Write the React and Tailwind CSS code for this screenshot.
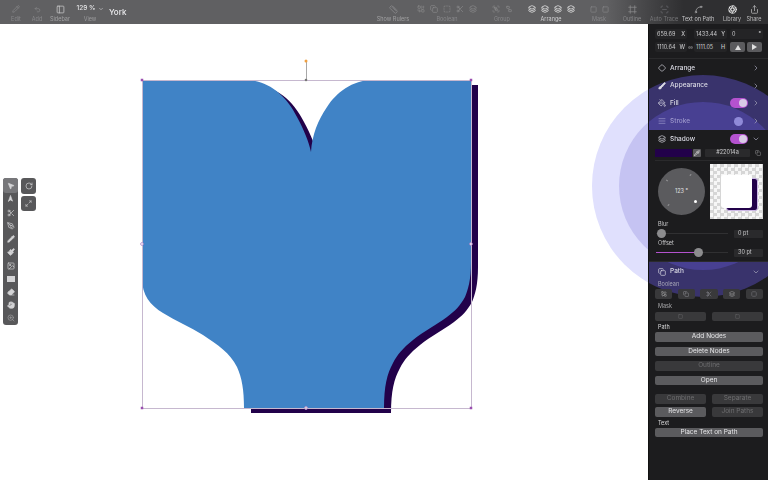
import React from "react";
import { Pencil, PanelLeft, ChevronDown, ChevronRight, Ruler, Layers, Share, Diamond, PaintBucket, Brush, AlignJustify, Pipette, MousePointer2, Navigation, Scissors, PenTool, Paintbrush, Square, Eraser, Hand, ZoomIn, RotateCw, Spline, Combine, Copy, Undo2, SquareDashed, Image, ScanLine, Group, Ungroup, Aperture, Frame, Maximize2, Link2 } from "lucide-react";

function Tool({ w, ml = 0, label, dim = true, labelClass, children }) {
  return (
    <div className="flex flex-col items-center shrink-0" style={{ width: w, marginLeft: ml }}>
      <div className={`flex items-center justify-center gap-[5px] h-[12px] mt-[3px] ${dim ? "text-[#8b8b8d]" : "text-white"}`}>{children}</div>
      <div className={`text-[5.5px] leading-[7px] mt-[1px] whitespace-nowrap ${labelClass || (dim ? "text-[#87878a]" : "text-[#cfcfd1]")}`}>{label}</div>
    </div>
  );
}

function Toolbar() {
  return (
    <div className="h-6 shrink-0 flex bg-gradient-to-r from-[#606062] from-[79%] to-[#2f2f31] to-[89%] relative z-20 blur-[0.35px]">
      <Tool w={24} ml={4} label="Edit"><Pencil size={8} /></Tool>
      <Tool w={18} label="Add"><Undo2 size={7} /></Tool>
      <Tool w={28} label="Sidebar" labelClass="text-[#a0a0a2]"><PanelLeft size={9} className="text-[#c8c8ca]" /></Tool>
      <div className="w-[32px] flex flex-col items-center shrink-0">
        <div className="h-[12px] mt-[3px] flex items-center gap-[2px] text-[6.5px] text-[#e4e4e6] font-medium whitespace-nowrap">129 %<ChevronDown size={6} /></div>
        <div className="text-[5.5px] leading-[7px] mt-[1px] text-[#9a9a9c]">View</div>
      </div>
      <div className="ml-[3px] text-[8px] font-medium text-[#ececee] leading-[24px]">York</div>
      <div className="flex-1" />
      <Tool w={36} label="Show Rulers" labelClass="text-[#a0a0a2]"><Ruler size={9} /></Tool>
      <Tool w={66} ml={3} label="Boolean">
        <Combine size={8} /><Copy size={8} /><SquareDashed size={8} /><Scissors size={8} /><Layers size={8} />
      </Tool>
      <Tool w={28} ml={8} label="Group"><Group size={8} /><Ungroup size={8} /></Tool>
      <Tool w={54} ml={8} label="Arrange" dim={false}>
        <Layers size={8} /><Layers size={8} /><Layers size={8} /><Layers size={8} />
      </Tool>
      <Tool w={26} ml={8} label="Mask"><Square size={7} /><Square size={7} /></Tool>
      <Tool w={24} ml={8} label="Outline"><Frame size={9} /></Tool>
      <Tool w={32} ml={4} label="Auto Trace" labelClass="text-[#77777a]"><ScanLine size={9} className="text-[#66666a]" /></Tool>
      <Tool w={32} ml={2} label="Text on Path" labelClass="text-[#c4c4c6]"><Spline size={9} className="text-[#a8a8aa]" /></Tool>
      <Tool w={24} ml={6} label="Library" labelClass="text-[#b8b8ba]" dim={false}><Aperture size={9} /></Tool>
      <Tool w={20} label="Share" labelClass="text-[#b8b8ba]"><Share size={9} className="text-[#b8b8ba]" /></Tool>
      <div className="w-1 shrink-0" />
    </div>
  );
}

const SHAPE =
  "M142 80 H245 C268 80 286 95 297 117 C304 130 309 142 311 152 C312 135 318 120 327 107 C336 93 352 80 373 80 H471 V262 C471 280 468 290 465 297 C460 306 455 311 447 317 C436 325 424 331 413 340 C403 348 397 355 393 363 C387 374 384 386 384 408 H244 C244 390 242 378 237 367 C230 353 218 345 203 335 C190 327 176 321 163 313 C150 305 142 295 142 278 Z";

const SHADOW =
  "M251 85 H252 C275 85 293 100 304 122 C311 135 316 147 318 157 C319 140 325 125 334 112 C343 98 359 85 380 85 H478 V267 C478 285 475 295 472 302 C467 311 462 316 454 322 C443 330 431 336 420 345 C410 353 404 360 400 368 C394 379 391 391 391 413 H251 Z";

function Handle({ x, y }) {
  return <rect x={x - 1.25} y={y - 1.25} width="2.5" height="2.5" fill="#9a4fb0" />;
}

function Canvas() {
  return (
    <div className="flex-1 relative overflow-hidden bg-white">
      <div className="absolute left-[592px] top-[51px] w-[222px] h-[222px] rounded-full bg-[#e0e0fd]" />
      <div className="absolute left-[619px] top-[78px] w-[168px] h-[168px] rounded-full bg-[#c5c3f2]" />
      <svg className="absolute inset-0 w-full h-full" viewBox="0 24 648 456">
        <path d={SHADOW} fill="#22014a" />
        <path d={SHAPE} fill="#4083c6" />
        <rect x="142.5" y="80.5" width="329" height="328" fill="none" stroke="#c6b8cf" strokeWidth="1" />
        <line x1="306.5" y1="61" x2="306.5" y2="80" stroke="#a8a8a8" strokeWidth="1" />
        <circle cx="306" cy="61" r="1.5" fill="#f0a040" />
        <circle cx="306" cy="80" r="1.3" fill="#777" />
        <Handle x={142} y={80} /><Handle x={471} y={80} /><Handle x={142} y={408} /><Handle x={471} y={408} />
        <circle cx="142" cy="244" r="1.4" fill="#fff" stroke="#a873c0" strokeWidth="0.7" />
        <circle cx="471" cy="244" r="1.4" fill="#fff" stroke="#a873c0" strokeWidth="0.7" />
        <circle cx="306" cy="408" r="1.5" fill="#ddd" stroke="#b58fd0" strokeWidth="0.8" />
      </svg>
      <div className="absolute left-[3px] top-[154px] w-[15px] h-[147px] rounded-[3px] bg-[#58585a] flex flex-col items-center text-[#d4d4d6] blur-[0.35px]">
        <div className="w-[15px] h-[15px] rounded-[3px] bg-[#77777a] flex items-center justify-center"><MousePointer2 size={8} fill="currentColor" /></div>
        <div className="h-[13.2px] flex items-center"><Navigation size={7} fill="currentColor" className="-rotate-45" /></div>
        <div className="h-[13.2px] flex items-center"><Scissors size={8} /></div>
        <div className="h-[13.2px] flex items-center"><PenTool size={8} /></div>
        <div className="h-[13.2px] flex items-center"><Pencil size={8} fill="currentColor" /></div>
        <div className="h-[13.2px] flex items-center"><Paintbrush size={8} fill="currentColor" /></div>
        <div className="h-[13.2px] flex items-center"><Image size={8} /></div>
        <div className="h-[13.2px] flex items-center"><div className="w-[8px] h-[6px] bg-[#d4d4d6]" /></div>
        <div className="h-[13.2px] flex items-center"><Eraser size={8} fill="currentColor" /></div>
        <div className="h-[13.2px] flex items-center"><Hand size={8} fill="currentColor" /></div>
        <div className="h-[13.2px] flex items-center"><ZoomIn size={8} className="text-[#a0a0a2]" /></div>
      </div>
      <div className="absolute left-[21px] top-[154px] w-[15px] h-[16px] rounded-[3px] bg-[#58585a] flex items-center justify-center text-[#d4d4d6] blur-[0.35px]"><RotateCw size={8} /></div>
      <div className="absolute left-[21px] top-[172px] w-[15px] h-[15px] rounded-[3px] bg-[#58585a] flex items-center justify-center text-[#d4d4d6] blur-[0.35px]"><Maximize2 size={7} /></div>
    </div>
  );
}

function Toggle() {
  return (
    <div className="w-[18px] h-[10px] rounded-full bg-[#b452cf] flex items-center justify-end pr-[1px]">
      <div className="w-[8px] h-[8px] rounded-full bg-[#d9cbe6]" />
    </div>
  );
}

function Row({ icon, label, right, chevron = "right", h = "h-[17.75px]", dim }) {
  const Ch = chevron === "down" ? ChevronDown : ChevronRight;
  return (
    <div className={`${h} flex items-center pl-[9px] pr-[8px] ${dim ? "text-[#9d98cc]" : "text-[#dcdce6]"}`}>
      <span className="w-[12px] flex">{icon}</span>
      <span className="text-[6.5px] font-medium whitespace-nowrap pt-[1px]">{label}</span>
      <div className="ml-auto flex items-center gap-[4px]">
        {right}
        <Ch size={8} className="text-[#a9a9bd]" />
      </div>
    </div>
  );
}

function Field({ w, value, suffix, ml = 0 }) {
  return (
    <div className="h-[10px] rounded-[2px] bg-[#242426] flex items-center px-[2px] text-[5.5px] text-[#c8c8ca]" style={{ width: w, marginLeft: ml }}>
      <span>{value}</span>
      {suffix && <span className="ml-auto font-medium">{suffix}</span>}
    </div>
  );
}

function Btn({ children, off, className = "" }) {
  return (
    <div className={`h-[9.5px] rounded-[2px] flex items-center justify-center pt-[1px] text-[6.5px] whitespace-nowrap ${off ? "bg-[#39393b] text-[#6e6e70]" : "bg-[#5b5b5e] text-[#e6e6e8]"} ${className}`}>
      {children}
    </div>
  );
}

function Label({ children, className = "" }) {
  return <div className={`text-[5.5px] leading-[7px] pl-[9px] ${className}`}>{children}</div>;
}

function Slider({ pos, fill }) {
  return (
    <div className="flex items-center h-[9px] pl-[7px] pr-[6px]">
      <div className="relative w-[72px] h-[1.5px] bg-[#303032]">
        {fill && <div className="absolute left-0 top-0 h-[1.5px] bg-[#b452cf]" style={{ width: pos }} />}
        <div className="absolute top-[-3.75px] w-[9px] h-[9px] rounded-full bg-[#8c8c8e]" style={{ left: pos - 4 }} />
      </div>
    </div>
  );
}

function Panel() {
  return (
    <div className="w-[120px] shrink-0 relative overflow-hidden bg-[#1c1c1e] border-l border-[#111]">
      <div className="absolute left-[-57px] top-[51px] w-[222px] h-[222px] rounded-full bg-[#39336c]" />
      <div className="absolute left-[-30px] top-[78px] w-[168px] h-[168px] rounded-full bg-[#484092]" />
      <div className="relative text-[#c8c8ca] blur-[0.35px]">
        <div className="pt-[5px] h-[35px] bg-[#1c1c1e] border-b border-[#2a2a2c]">
          <div className="flex pl-[6px]">
            <Field w={32} value="659.69" suffix="X" />
            <Field w={33} ml={7} value="1433.44" suffix="Y" />
            <Field w={33} ml={3} value="0" suffix="°" />
          </div>
          <div className="flex pl-[6px] mt-[3px] items-center">
            <Field w={32} value="1110.64" suffix="W" />
            <Link2 size={5} className="ml-[1px]" />
            <Field w={33} ml={1} value="1111.05" suffix="H" />
            <div className="w-[15px] h-[10px] ml-[3px] rounded-[2px] bg-[#5b5b5e] flex items-center justify-center"><div className="w-0 h-0 border-l-[3px] border-r-[3px] border-b-[5px] border-l-transparent border-r-transparent border-b-[#e0e0e0]" /></div>
            <div className="w-[15px] h-[10px] ml-[2px] rounded-[2px] bg-[#5b5b5e] flex items-center justify-center"><div className="w-0 h-0 border-t-[3px] border-b-[3px] border-l-[5px] border-t-transparent border-b-transparent border-l-[#e0e0e0]" /></div>
          </div>
        </div>
        <Row icon={<Diamond size={8} />} label="Arrange" />
        <Row icon={<Brush size={8} fill="currentColor" />} label="Appearance" />
        <Row icon={<PaintBucket size={8} />} label="Fill" right={<Toggle />} />
        <Row icon={<AlignJustify size={8} />} label="Stroke" dim right={<div className="w-[9px] h-[9px] rounded-full bg-[#8f8ad8] mr-[5px]" />} />
        <div className="h-[132px] bg-[#1c1c1e] border-b border-[#2a2a2c]">
          <Row h="h-[18px]" chevron="down" icon={<Layers size={8} />} label="Shadow" right={<Toggle />} />
          <div className="flex items-center pl-[6px] h-[9px]">
            <div className="w-[37px] h-[8px] bg-[#22014a]" />
            <div className="w-[8px] h-[8px] ml-[1px] rounded-[1px] bg-[#5b5b5e] flex items-center justify-center text-white"><Pipette size={6} /></div>
            <div className="w-[45px] h-[8px] ml-[4px] rounded-[1px] bg-[#2a2a2c] text-[5.5px] flex items-center justify-center">#22014a</div>
            <Copy size={6} className="ml-[5px] text-[#8b8b8d]" />
          </div>
          <div className="h-[1px] mt-[3px] mx-[6px] bg-[#2a2a2c]" />
          <div className="flex items-start pl-[9px] mt-[3px]">
            <div className="relative w-[47px] h-[47px] mt-[4px] rounded-full bg-[#5b5b5e] flex items-center justify-center text-[5.5px] text-[#e0e0e2]">
              123 °
              <div className="absolute left-[36px] top-[32px] w-[3px] h-[3px] rounded-full bg-white" />
              <div className="absolute left-[32px] top-[6px] w-[1px] h-[2px] bg-[#9a9a9c] rotate-45" />
              <div className="absolute left-[10px] top-[36px] w-[1px] h-[2px] bg-[#9a9a9c] rotate-45" />
              <div className="absolute left-[8px] top-[12px] w-[2px] h-[1px] bg-[#9a9a9c] rotate-45" />
            </div>
            <div className="relative w-[53px] h-[55px] ml-[5px] bg-[repeating-conic-gradient(#d6d6d6_0_25%,#f6f6f6_0_50%)] bg-[length:7px_7px]">
              <div className="absolute left-[16px] top-[14px] w-[32px] h-[33px] rounded-[3px] bg-[#22014a] border border-[#cdb8e6]" />
              <div className="absolute left-[11px] top-[11px] w-[31px] h-[33px] rounded-[3px] bg-white" />
            </div>
          </div>
          <Label className="mt-[2px] pl-[8px]">Blur</Label>
          <div className="flex items-center mt-[1px]">
            <Slider pos={5} />
            <div className="ml-auto mr-[5px] w-[29px] h-[8px] rounded-[1px] bg-[#2a2a2c] text-[5.5px] flex items-center pl-[4px]">0 pt</div>
          </div>
          <Label className="mt-[2px] pl-[8px]">Offset</Label>
          <div className="flex items-center mt-[1px]">
            <Slider pos={42} fill />
            <div className="ml-auto mr-[5px] w-[29px] h-[8px] rounded-[1px] bg-[#2a2a2c] text-[5.5px] flex items-center pl-[4px]">30 pt</div>
          </div>
        </div>
        <Row h="h-[19px]" chevron="down" icon={<Copy size={8} />} label="Path" />
        <Label className="text-[#a8a8b8]">Boolean</Label>
        <div className="grid grid-cols-5 gap-[5.5px] pl-[6px] pr-[5px] mt-[1px] text-[#a8a8aa]">
          <Btn off className="text-[#a8a8aa]"><Combine size={6} /></Btn>
          <Btn off className="text-[#8a8a90]"><Copy size={6} /></Btn>
          <Btn off className="text-[#8a8a90]"><Scissors size={6} /></Btn>
          <Btn off className="text-[#a8a8aa]"><Layers size={6} /></Btn>
          <Btn off className="text-[#8a8a90]"><SquareDashed size={6} /></Btn>
        </div>
        <Label className="mt-[4px] text-[#a8a8aa]">Mask</Label>
        <div className="grid grid-cols-2 gap-[6px] pl-[6px] pr-[5px] mt-[2px]">
          <Btn off><Square size={5} /></Btn>
          <Btn off><Square size={5} /></Btn>
        </div>
        <Label className="mt-[3px] text-[#dcdcde]">Path</Label>
        <div className="flex flex-col pl-[6px] pr-[5px] mt-[1px]">
          <Btn>Add Nodes</Btn>
          <Btn className="mt-[5px]">Delete Nodes</Btn>
          <Btn off className="mt-[5px]">Outline</Btn>
          <Btn className="mt-[5px]">Open</Btn>
          <div className="grid grid-cols-2 gap-[6px] mt-[9px]">
            <Btn off>Combine</Btn>
            <Btn off>Separate</Btn>
          </div>
          <div className="grid grid-cols-2 gap-[6px] mt-[3.5px]">
            <Btn>Reverse</Btn>
            <Btn off>Join Paths</Btn>
          </div>
        </div>
        <Label className="mt-[3px] text-[#dcdcde]">Text</Label>
        <div className="pl-[6px] pr-[5px] mt-[1px]">
          <Btn>Place Text on Path</Btn>
        </div>
      </div>
    </div>
  );
}

export default function App() {
  return (
    <div className="w-[768px] h-[480px] overflow-hidden flex flex-col bg-white font-['Inter',sans-serif]">
      <Toolbar />
      <div className="flex-1 flex min-h-0">
        <Canvas />
        <Panel />
      </div>
    </div>
  );
}
